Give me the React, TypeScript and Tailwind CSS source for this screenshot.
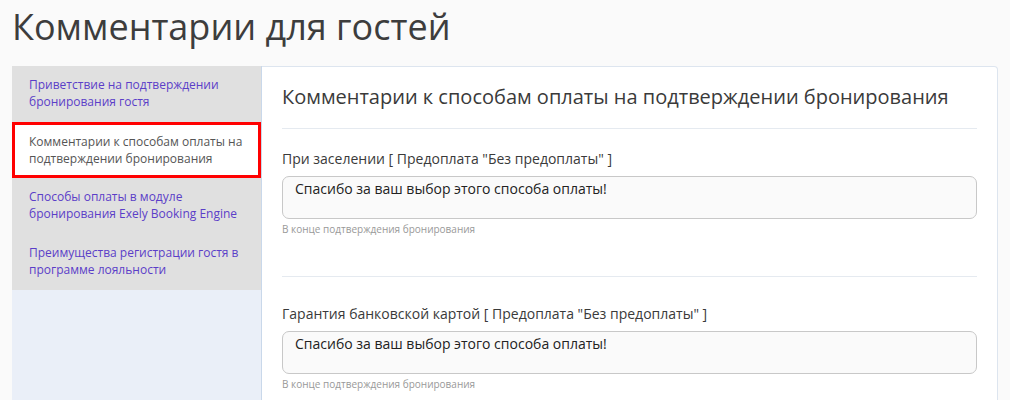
const menu = [
  { title: "Приветствие на подтверждении бронирования гостя", active: false },
  { title: "Комментарии к способам оплаты на подтверждении бронирования", active: true },
  { title: "Способы оплаты в модуле бронирования Exely Booking Engine", active: false },
  { title: "Преимущества регистрации гостя в программе лояльности", active: false },
];

const fields = [
  { label: 'При заселении [ Предоплата "Без предоплаты" ]', value: "Спасибо за ваш выбор этого способа оплаты!", pad: "pt-[20px]" },
  { label: 'Гарантия банковской картой [ Предоплата "Без предоплаты" ]', value: "Спасибо за ваш выбор этого способа оплаты!", pad: "pt-[27px]" },
];

export default function App() {
  return (
    <div className="min-h-[400px] bg-[#fafafa] px-3 pb-6 font-['Open_Sans',sans-serif] text-[#333]">
      <h1 className="pt-[3px] text-[36px] leading-[48px] text-[#3d3d3d]">Комментарии для гостей</h1>

      <div className="mt-[15px] flex">
        {/* Sidebar */}
        <div className="flex w-[250px] shrink-0 flex-col border-r border-[#c9d8ea] bg-[#eaeff8]">
          {menu.map((m) =>
            m.active ? (
              <div
                key={m.title}
                className="h-[56px] border-[3px] border-[#ff0000] bg-white pt-[8px] pl-[14px] pr-2 text-[12px] leading-[17px] text-[#555]"
              >
                {m.title}
              </div>
            ) : (
              <div
                key={m.title}
                className="h-[56px] bg-[#e0e0e0] pt-[10px] pl-[17px] pr-2 text-[12px] leading-[17px] text-[#5b3ec8]"
              >
                {m.title}
              </div>
            )
          )}
          <div className="h-[120px]" />
        </div>

        {/* Content */}
        <div className="flex-1 rounded-tr-[4px] border border-l-0 border-[#dde5ef] bg-white px-[20px] pt-[17px]">
          <h2 className="pb-[18px] text-[20px] leading-[26px] text-[#3a3a3a]">
            Комментарии к способам оплаты на подтверждении бронирования
          </h2>
          {fields.map((f) => (
            <div key={f.label} className={`border-t border-[#e5eaf0] pb-[40px] ${f.pad}`}>
              <label className="block text-[14px] leading-[20px] text-[#3a3a3a]">{f.label}</label>
              <div className="mt-[7px] h-[43px] rounded-[7px] border border-[#c8c8c8] bg-[#fafafa] px-[12px] pt-[2px] text-[14px] leading-[20px] text-[#222]">
                {f.value}
              </div>
              <div className="mt-[3px] text-[10px] leading-[14px] text-[#999]">В конце подтверждения бронирования</div>
            </div>
          ))}
        </div>
      </div>
    </div>
  );
}
